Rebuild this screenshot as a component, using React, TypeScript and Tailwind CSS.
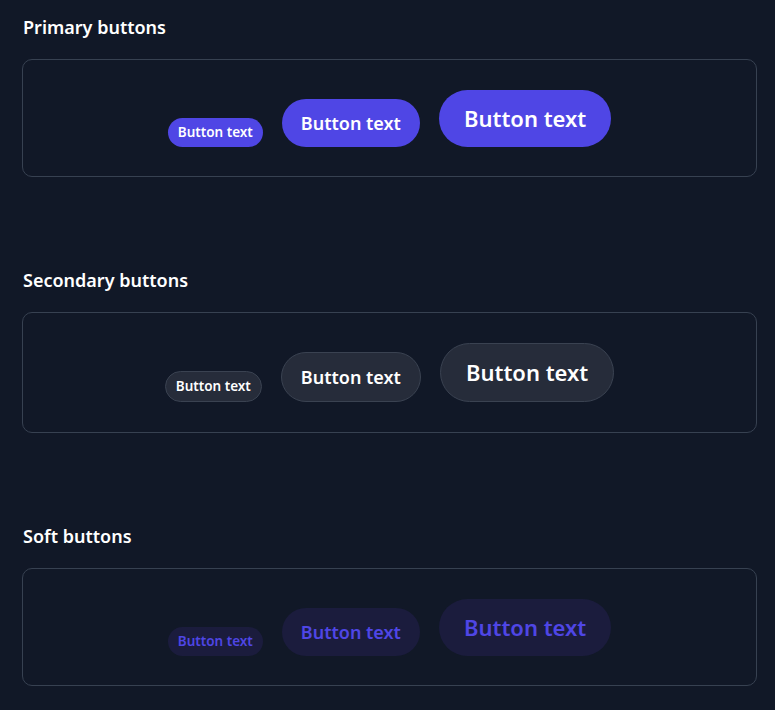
import React from "react";

type Variant = "primary" | "secondary" | "soft";

const variantCls: Record<Variant, string> = {
  primary: "bg-[#4f46e5] text-white",
  secondary: "bg-[#262c3a] text-white border border-[#3a4251]",
  soft: "bg-[#1b1c3d] text-[#4f46e5]",
};

function Row({ variant }: { variant: Variant }) {
  const v = variantCls[variant];
  const pad = variant === "secondary" ? "pt-[30px] pb-[30px]" : "pt-[30px] pb-[29px]";
  return (
    <div className={`flex items-end justify-center gap-[19px] rounded-[10px] border border-[#374151] ${pad}`}>
      <button className={`${v} rounded-full px-[10px] py-[4px] text-[13.5px] leading-[21px] font-semibold`}>
        Button text
      </button>
      <button className={`${v} rounded-full px-[19px] py-[10px] text-[18px] leading-[28px] font-semibold`}>
        Button text
      </button>
      <button className={`${v} rounded-full px-[25px] py-3 text-[22px] leading-[33px] font-semibold`}>
        Button text
      </button>
    </div>
  );
}

function Section({ title, variant, first }: { title: string; variant: Variant; first?: boolean }) {
  return (
    <section className={first ? "" : "mt-[91px]"}>
      <h2 className="mb-[19px] text-[18px] leading-[25px] font-semibold text-white px-[1px]">{title}</h2>
      <Row variant={variant} />
    </section>
  );
}

export default function App() {
  return (
    <div
      className="min-h-[710px] w-[775px] bg-[#111827] pl-[22px] pr-[18px] pt-[15px] pb-6"
      style={{ fontFamily: '"Noto Sans", "Open Sans", sans-serif' }}
    >
      <Section title="Primary buttons" variant="primary" first />
      <Section title="Secondary buttons" variant="secondary" />
      <Section title="Soft buttons" variant="soft" />
    </div>
  );
}
